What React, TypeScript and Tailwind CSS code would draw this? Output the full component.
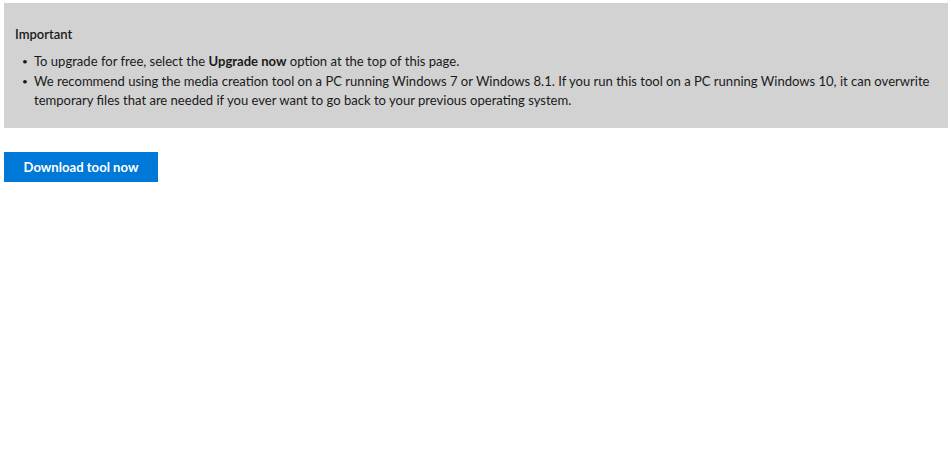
export default function App() {
  const font = { fontFamily: 'Lato, "Open Sans", sans-serif' };
  return (
    <div className="bg-white w-[951px] h-[460px] pt-[3px] pl-[4px] pr-[3px] text-black" style={font}>
      <div className="bg-[#d2d2d2] h-[125px] pl-[11px] pr-[10px] pt-[22px]">
        <div className="text-[13px] font-semibold leading-[18px] text-[#1a1a1a]">Important</div>
        <ul className="mt-[9px] text-[13.05px] leading-[19.5px] text-[#1a1a1a]">
          <li className="flex">
            <span className="w-[19px] pl-[7px] shrink-0 text-[10px]">•</span>
            <span>To upgrade for free, select the <b className="font-bold">Upgrade now</b> option at the top of this page.</span>
          </li>
          <li className="flex">
            <span className="w-[19px] pl-[7px] shrink-0 text-[10px]">•</span>
            <span>We recommend using the media creation tool on a PC running Windows 7 or Windows 8.1. If you run this tool on a PC running Windows 10, it can overwrite temporary files that are needed if you ever want to go back to your previous operating system.</span>
          </li>
        </ul>
      </div>
      <button className="mt-[24px] w-[154px] h-[30px] pt-[1px] bg-[#0078d7] text-white text-[13.1px] font-bold">Download tool now</button>
    </div>
  );
}
